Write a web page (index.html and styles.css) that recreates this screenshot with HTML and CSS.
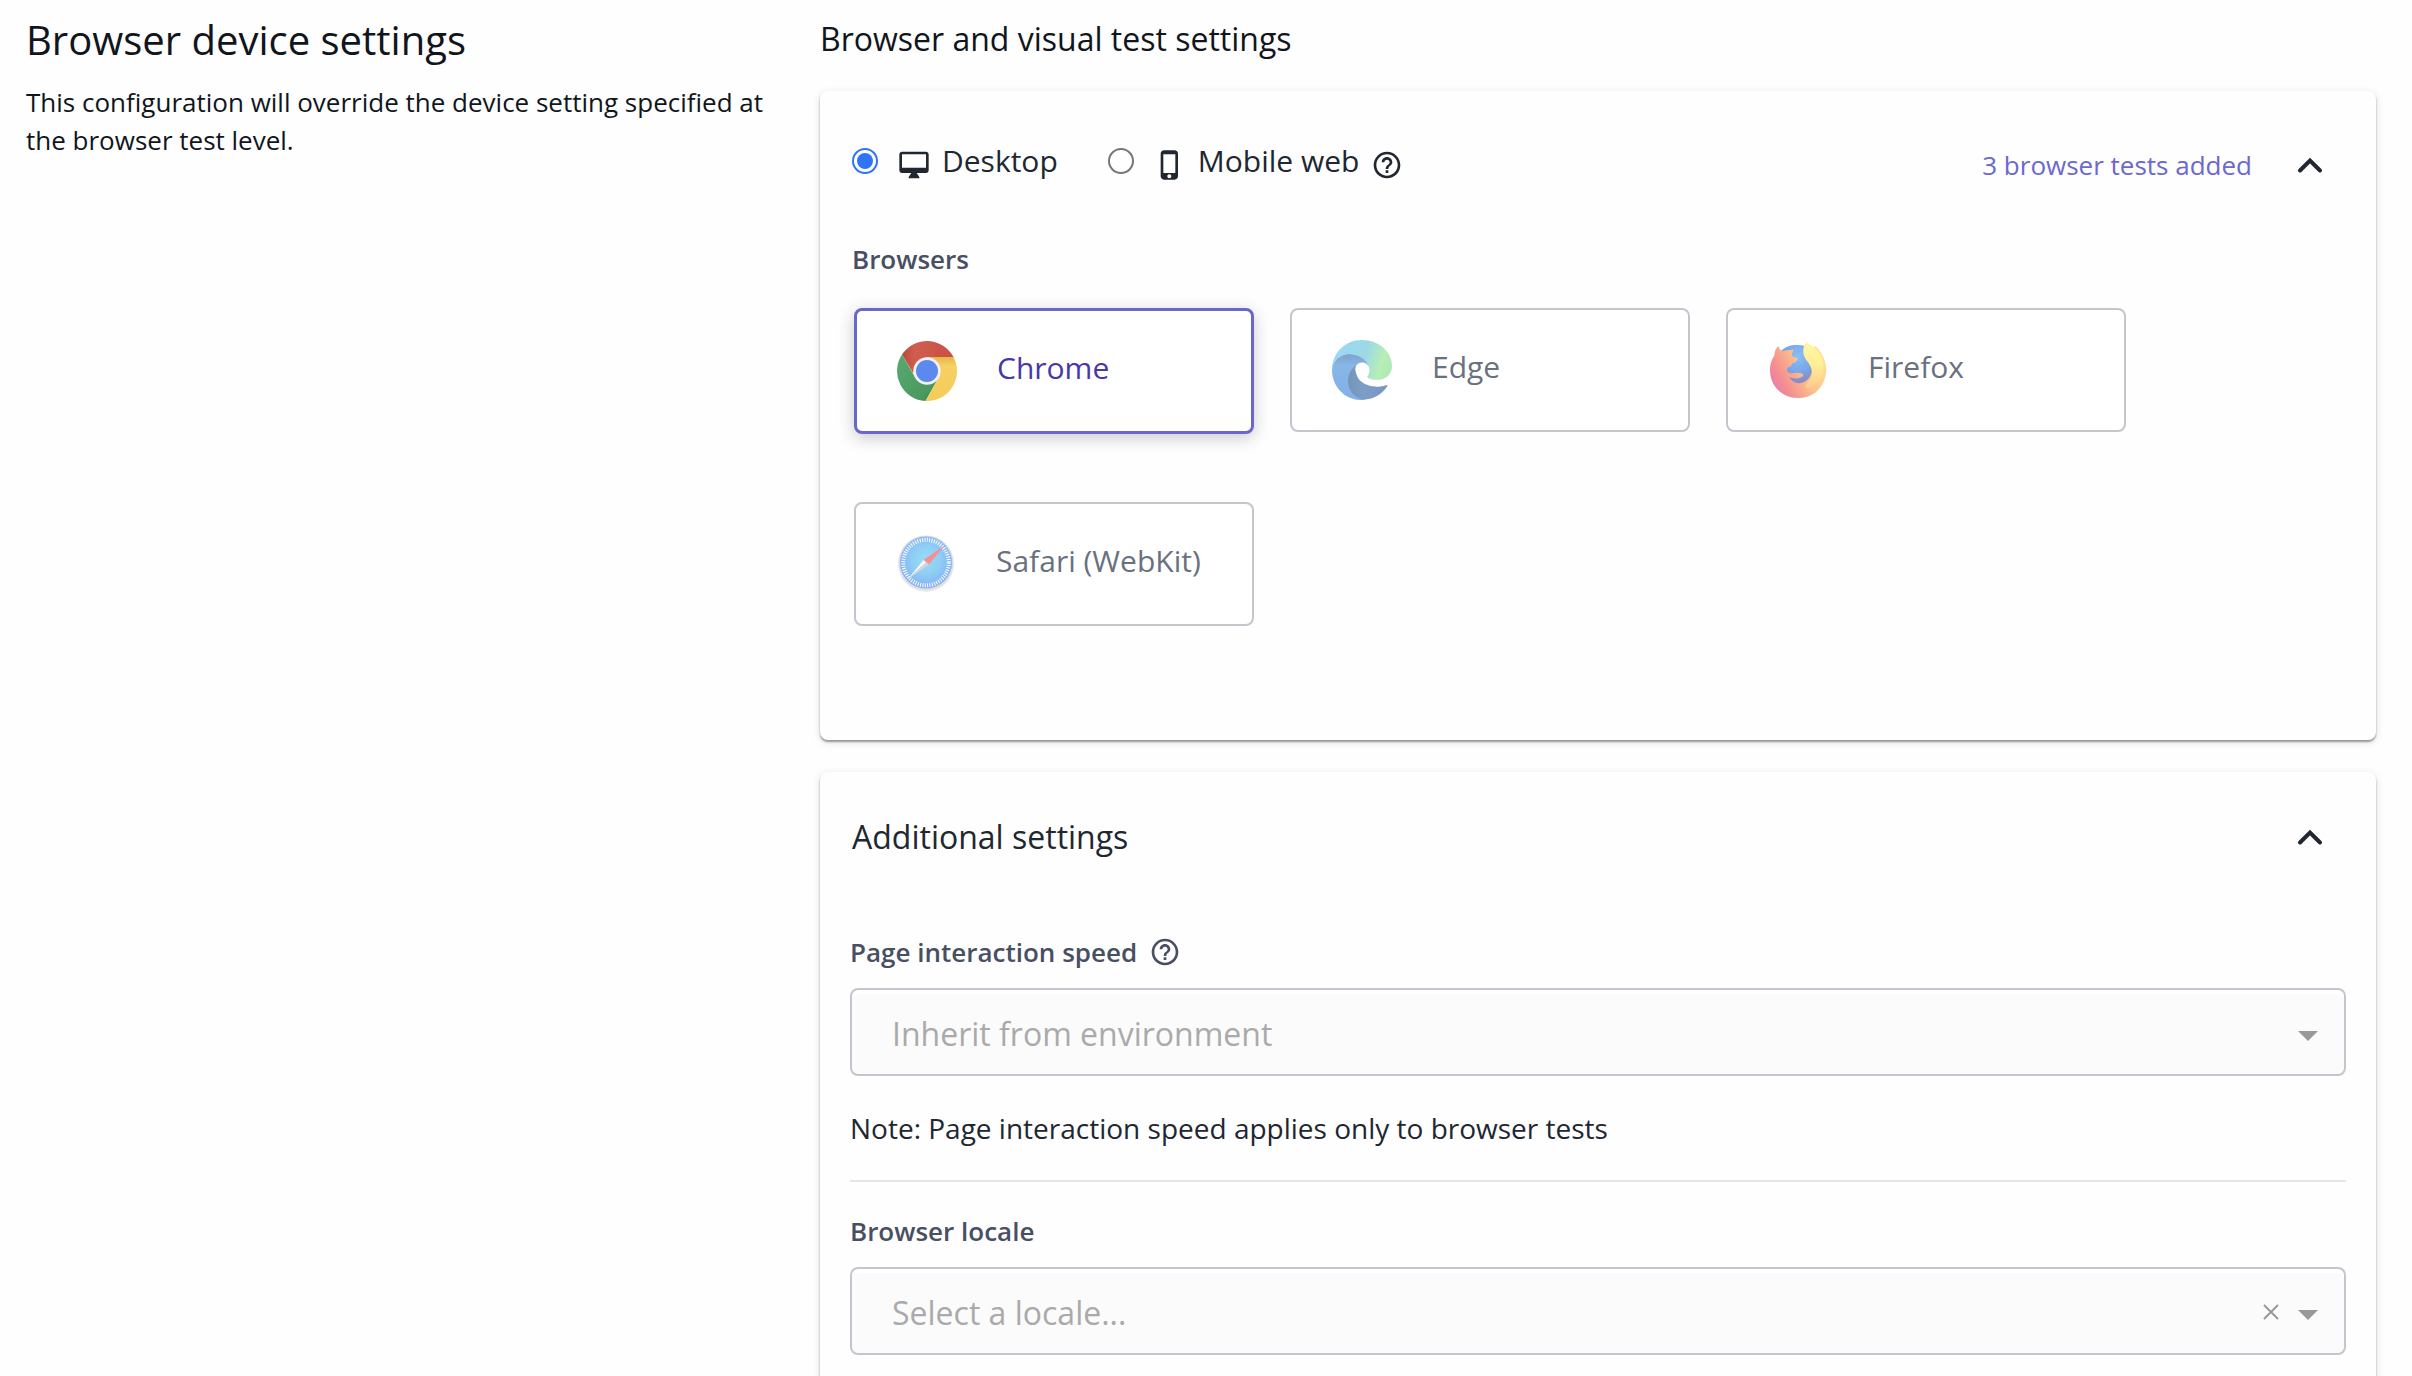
FILE: index.html
```html
<!DOCTYPE html>
<html lang="en">
<head>
    <meta charset="UTF-8">
    <meta name="viewport" content="width=device-width, initial-scale=1.0">
    <title>Browser device settings</title>
    <link rel="stylesheet" href="styles.css">
</head>

<body>
    <main class="page">
        <section class="intro">
            <h1 class="page-title">Browser device settings</h1>
            <p class="intro-text">This configuration will override the device setting specified at the browser test level.</p>
        </section>

        <section class="settings">
            <h2 class="settings-title">Browser and visual test settings</h2>

            <div class="card card-browsers">
                <div class="card-header">
                    <div class="device-types">
                        <div class="device">
                            <input type="radio" class="radio" name="device" id="desktop" checked>
                            <label for="desktop" class="device-label">
                                <svg class="icon" viewBox="0 0 24 24"><path d="M21 2H3c-1.1 0-2 .9-2 2v12c0 1.1.9 2 2 2h7l-2 3v1h8v-1l-2-3h7c1.1 0 2-.9 2-2V4c0-1.1-.9-2-2-2zm0 12H3V4h18v10z"/></svg>
                                Desktop
                            </label>
                        </div>
                        <div class="device">
                            <input type="radio" class="radio" name="device" id="mobile">
                            <label for="mobile" class="device-label">
                                <svg class="icon" viewBox="0 0 24 24"><path d="M15.5 1h-8C6.12 1 5 2.12 5 3.5v17C5 21.88 6.12 23 7.5 23h8c1.38 0 2.5-1.12 2.5-2.5v-17C18 2.12 16.88 1 15.5 1zm-4 21c-.83 0-1.5-.67-1.5-1.5s.67-1.5 1.5-1.5 1.5.67 1.5 1.5-.67 1.5-1.5 1.5zm4.5-4H7V4h9v14z"/></svg>
                                Mobile web
                                <svg class="icon" viewBox="0 0 24 24"><path d="M11 18h2v-2h-2v2zm1-16C6.48 2 2 6.48 2 12s4.48 10 10 10 10-4.48 10-10S17.52 2 12 2zm0 18c-4.41 0-8-3.59-8-8s3.59-8 8-8 8 3.59 8 8-3.59 8-8 8zm0-14c-2.21 0-4 1.79-4 4h2c0-1.1.9-2 2-2s2 .9 2 2c0 2-3 1.75-3 5h2c0-2.25 3-2.5 3-5 0-2.21-1.79-4-4-4z"/></svg>
                            </label>
                        </div>
                    </div>
                    <div class="header-actions">
                        <a href="#" class="tests-link">3 browser tests added</a>
                        <button type="button" class="collapse" aria-label="Collapse browsers">
                            <svg viewBox="0 0 48 48"><path d="M14 29.500L24 19.500L34 29.500"/></svg>
                        </button>
                    </div>
                </div>

                <h3 class="field-label browsers-label">Browsers</h3>
                <div class="browsers">
                    <button type="button" class="browser selected">
                        <svg class="browser-icon" viewBox="0 0 60 60">
                            <defs>
                                <linearGradient id="chromeRed" x1="0" y1="0" x2="1" y2="0">
                                    <stop offset="0" stop-color="#b9493b"/>
                                    <stop offset=".25" stop-color="#cf5e50"/>
                                    <stop offset="1" stop-color="#c85041"/>
                                </linearGradient>
                                <linearGradient id="chromeGreen" x1="0" y1="0" x2="1" y2="1">
                                    <stop offset="0" stop-color="#59a870"/>
                                    <stop offset=".75" stop-color="#4a9a60"/>
                                    <stop offset="1" stop-color="#357546"/>
                                </linearGradient>
                                <linearGradient id="chromeYellow" x1="0" y1="0" x2="0" y2="1">
                                    <stop offset="0" stop-color="#e5b549"/>
                                    <stop offset=".2" stop-color="#f6d062"/>
                                    <stop offset="1" stop-color="#f5cc58"/>
                                </linearGradient>
                            </defs>
                            <path fill="url(#chromeRed)" d="M5 13.500A30 30 0 0 1 56.500 16L30 16L16 32Z"/>
                            <path fill="url(#chromeGreen)" d="M5 13.500A30 30 0 0 0 28.500 60L42 36L18.500 37Z"/>
                            <path fill="url(#chromeYellow)" d="M56.500 16A30 30 0 0 1 28.500 60L41.500 37L30 16Z"/>
                            <circle cx="30" cy="30" r="13.700" fill="#f1f1f1"/>
                            <circle cx="30" cy="30" r="11" fill="#5b89ed"/>
                        </svg>
                        <span class="browser-name">Chrome</span>
                    </button>
                    <button type="button" class="browser">
                        <svg class="browser-icon" viewBox="0 0 60 60">
                            <defs>
                                <linearGradient id="edgeTop" x1="0" y1=".3" x2="1" y2=".5">
                                    <stop offset="0" stop-color="#54c0f0"/>
                                    <stop offset=".55" stop-color="#5fbfd5"/>
                                    <stop offset=".85" stop-color="#86e684"/>
                                    <stop offset="1" stop-color="#7bdc86"/>
                                </linearGradient>
                                <linearGradient id="edgeBlue" x1="0" y1="0" x2="0" y2="1">
                                    <stop offset="0" stop-color="#2a66ac"/>
                                    <stop offset=".25" stop-color="#3a86d4"/>
                                    <stop offset="1" stop-color="#2f7cdb"/>
                                </linearGradient>
                                <linearGradient id="edgeDark" x1="0" y1="0" x2="1" y2="0">
                                    <stop offset="0" stop-color="#1b4f8d"/>
                                    <stop offset=".4" stop-color="#265ea1"/>
                                    <stop offset="1" stop-color="#24509a"/>
                                </linearGradient>
                            </defs>
                            <path fill="url(#edgeBlue)" d="M0 30C0 22 7 14 17 14C28 14 36 20 37.500 28C36 24 33 22.500 30 22.500C26 22.500 23 26 23 30L33 59.800C14 62 0 47 0 30Z"/>
                            <path fill="url(#edgeDark)" d="M23.500 25.500C18 30 16 36 16 41C16 51 23 59 33 59.500C43 59 51 53 55.500 46C55.500 45 55 44.700 54 45.200C40 50 21 43 23.500 25.500Z"/>
                            <path fill="url(#edgeTop)" d="M0 30C0 13 13 0 30 0C47 0 60 12 60 26C60 34 54 40 45 40C40 40 37 39 35.500 37.500C34.500 36.500 37.500 35 37.500 30C37.500 22 28 14 17 14C7 14 0 22 0 30Z"/>
                        </svg>
                        <span class="browser-name">Edge</span>
                    </button>
                    <button type="button" class="browser">
                        <svg class="browser-icon" viewBox="0 0 60 60">
                            <defs>
                                <radialGradient id="foxGlobe" cx=".5" cy=".3" r=".7">
                                    <stop offset="0" stop-color="#3c95f7"/>
                                    <stop offset=".6" stop-color="#2268d5"/>
                                    <stop offset="1" stop-color="#44338d"/>
                                </radialGradient>
                                <linearGradient id="foxBody" x1=".95" y1=".3" x2=".05" y2=".75">
                                    <stop offset="0" stop-color="#ffc843"/>
                                    <stop offset=".4" stop-color="#fb9a44"/>
                                    <stop offset=".8" stop-color="#ef4545"/>
                                    <stop offset="1" stop-color="#d72b75"/>
                                </linearGradient>
                                <linearGradient id="foxTail" x1="0" y1="0" x2="0" y2="1">
                                    <stop offset="0" stop-color="#fff36c"/>
                                    <stop offset=".5" stop-color="#ffe550"/>
                                    <stop offset="1" stop-color="#fca746"/>
                                </linearGradient>
                            </defs>
                            <path fill="url(#foxGlobe)" d="M12 12C19 4 29 4 37 6L48 25C46 38 38 45 30 44L16 40Z"/>
                            <path fill="url(#foxBody)" d="M10.500 6C11 8 12.500 10 13.500 11.500C16.500 10 21 10.500 26 9.500C24.500 11.500 23.500 13.500 24.500 16.500L30 18C29 21 28 22 24 23.500L23 26.500C19 26.500 18 29 20 32C23 35 27 32 31 33C34 33 36 34 35 36C32 38.500 27 39.500 21.500 37C25 45 36 45 41 38C45 33 45 25 39 19L47 6C55 13 60 24 57.500 36C54 51 43 58 30 58C14 58 2 46 2 30C2 22 5 18 6.500 15C6.500 11 8 8 10.500 6Z"/>
                            <path fill="url(#foxTail)" d="M39 1C40 4 43 5 46 7C54 14 57.500 23 55 33C52 43 46 48 39 48C35 47 39 44 42 40C46 34 44 27 39 21C33 13 35 6 39 1Z"/>
                        </svg>
                        <span class="browser-name">Firefox</span>
                    </button>
                    <button type="button" class="browser">
                        <svg class="browser-icon" viewBox="0 0 60 60">
                            <defs>
                                <radialGradient id="safariFace" cx=".5" cy=".45" r=".55">
                                    <stop offset="0" stop-color="#54c6f2"/>
                                    <stop offset=".5" stop-color="#45aeef"/>
                                    <stop offset="1" stop-color="#3478f0"/>
                                </radialGradient>
                            </defs>
                            <circle cx="30" cy="30" r="28" fill="#e2e2e4"/>
                            <circle cx="30" cy="29" r="27.500" fill="#c9cace"/>
                            <circle cx="30" cy="28.600" r="26" fill="url(#safariFace)"/>
                            <circle cx="30" cy="28.600" r="22.800" fill="none" stroke="#fff" stroke-width="4" stroke-dasharray="1 1.390"/>
                            <path fill="#f0474a" d="M48.500 11.500L27.500 26L33 30.500Z"/>
                            <path fill="#f3f3f3" d="M11.500 45.500L27.500 26L30.200 28.300Z"/>
                            <path fill="#b9bcc2" d="M11.500 45.500L30.200 28.300L33 30.500Z"/>
                        </svg>
                        <span class="browser-name">Safari (WebKit)</span>
                    </button>
                </div>
            </div>

            <div class="card card-additional">
                <div class="card-header">
                    <h3 class="card-title">Additional settings</h3>
                    <button type="button" class="collapse" aria-label="Collapse additional settings">
                        <svg viewBox="0 0 48 48"><path d="M14 29.500L24 19.500L34 29.500"/></svg>
                    </button>
                </div>

                <div class="field field-speed">
                    <label for="speed" class="field-label">
                        Page interaction speed
                        <svg class="icon" viewBox="0 0 24 24"><path d="M11 18h2v-2h-2v2zm1-16C6.48 2 2 6.48 2 12s4.48 10 10 10 10-4.48 10-10S17.52 2 12 2zm0 18c-4.41 0-8-3.59-8-8s3.59-8 8-8 8 3.59 8 8-3.59 8-8 8zm0-14c-2.21 0-4 1.79-4 4h2c0-1.1.9-2 2-2s2 .9 2 2c0 2-3 1.75-3 5h2c0-2.25 3-2.5 3-5 0-2.21-1.79-4-4-4z"/></svg>
                    </label>
                    <div class="select-wrap">
                        <select id="speed" class="select">
                            <option>Inherit from environment</option>
                        </select>
                        <span class="arrow"></span>
                    </div>
                    <p class="note">Note: Page interaction speed applies only to browser tests</p>
                </div>

                <div class="field field-locale">
                    <label for="locale" class="field-label">Browser locale</label>
                    <div class="select-wrap">
                        <select id="locale" class="select">
                            <option>Select a locale...</option>
                        </select>
                        <button type="button" class="clear" aria-label="Clear locale">
                            <svg viewBox="0 0 16 16"><path d="M1 1L15 15M15 1L1 15"/></svg>
                        </button>
                        <span class="arrow"></span>
                    </div>
                </div>
            </div>
        </section>
    </main>
</body>

</html>
```
FILE: styles.css
```css
* {
    margin: 0;
    padding: 0;
    box-sizing: border-box;
}

body {
    background: #fefefe;
    color: #212730;
    font-family: "Open Sans", "Noto Sans", sans-serif;
    font-size: 26px;
}

button,
select {
    font-family: inherit;
}

.page {
    display: grid;
    grid-template-columns: 1fr 2fr;
    gap: 16px;
    padding: 13px 36px 0 26px;
}

/* left column */
.intro {
    padding-right: 24px;
    color: #11151c;
}

.page-title {
    font-size: 40px;
    font-weight: 400;
    line-height: 54px;
}

.intro-text {
    margin-top: 16px;
    font-size: 26px;
    line-height: 38px;
}

.settings-title {
    margin-bottom: 26px;
    color: #11151c;
    font-size: 32px;
    font-weight: 400;
    line-height: 52px;
}

/* cards */
.card {
    padding: 0 30px;
    background: #fefefe;
    border-radius: 8px;
    box-shadow: 0 2px 2px rgba(0, 0, 0, 0.36), 0 2px 8px rgba(0, 0, 0, 0.12);
}

.card-browsers {
    margin-bottom: 32px;
    padding-top: 50px;
    padding-bottom: 114px;
}

.card-additional {
    padding-top: 41px;
    padding-bottom: 60px;
}

.card-header {
    display: flex;
    justify-content: space-between;
    align-items: flex-start;
    padding: 0 12px 0 2px;
}

.card-title {
    font-size: 32px;
    font-weight: 400;
    line-height: 48px;
}

.header-actions {
    display: flex;
    align-items: center;
    gap: 34px;
}

.tests-link {
    color: #6b68ce;
    font-size: 26px;
    line-height: 36px;
    text-decoration: none;
}

.collapse {
    width: 48px;
    height: 48px;
    border: none;
    background: none;
    cursor: pointer;
}

.collapse svg {
    display: block;
    fill: none;
    stroke: #212730;
    stroke-width: 4;
    stroke-linecap: round;
}

/* desktop / mobile switch */
.device-types {
    display: flex;
    gap: 50px;
}

.device {
    display: flex;
    align-items: center;
    gap: 20px;
}

.device-label {
    display: flex;
    align-items: center;
    gap: 12px;
    font-size: 30px;
    line-height: 40px;
}

.icon {
    width: 32px;
    height: 32px;
    fill: currentColor;
}

.device-label .icon {
    margin-top: 8px;
}

.radio {
    display: grid;
    place-items: center;
    width: 26px;
    height: 26px;
    border: 2px solid #767676;
    border-radius: 50%;
    background: #fff;
    appearance: none;
}

.radio:checked {
    border-color: #2f74f6;
}

.radio:checked::before {
    content: "";
    width: 16px;
    height: 16px;
    border-radius: 50%;
    background: #2f74f6;
}

/* browser tiles */
.browsers-label {
    margin-top: 52px;
    padding-left: 2px;
}

.browsers {
    display: flex;
    flex-wrap: wrap;
    align-items: flex-start;
    gap: 68px 36px;
    margin-top: 31px;
    padding: 0 4px;
}

.browser {
    display: flex;
    align-items: center;
    gap: 40px;
    width: 400px;
    height: 124px;
    padding: 0 40px;
    border: 2px solid #c5c5cd;
    border-radius: 8px;
    background: #fff;
    color: #697180;
    font-size: 30px;
    cursor: pointer;
}

.browser-icon {
    width: 60px;
    height: 60px;
    opacity: 0.6;
}

.browser-name {
    padding-bottom: 6px;
    line-height: 40px;
}

.browser.selected {
    height: 126px;
    border: 3px solid #6968ca;
    box-shadow: 0 4px 16px rgba(33, 39, 60, 0.24);
    color: #4638a8;
}

.selected .browser-icon {
    opacity: 1;
}

/* form fields */
.field-label {
    display: flex;
    align-items: center;
    gap: 12px;
    color: #484f63;
    font-size: 26px;
    font-weight: 600;
    line-height: 36px;
}

.field-speed {
    margin-top: 73px;
    padding-bottom: 33px;
    border-bottom: 2px solid #e4e4e9;
}

.field-locale {
    margin-top: 31px;
}

.select-wrap {
    position: relative;
    margin-top: 18px;
}

.select {
    display: block;
    width: 100%;
    height: 88px;
    padding: 2px 100px 0 40px;
    border: 2px solid #c5c5cd;
    border-radius: 8px;
    background: #fbfbfb;
    box-shadow: inset 0 4px 1px #fff;
    color: #aaa;
    font-size: 32px;
    appearance: none;
}

.arrow {
    position: absolute;
    top: 43px;
    right: 28px;
    border: 10px solid transparent;
    border-top-color: #999;
    border-bottom: none;
    pointer-events: none;
}

.clear {
    position: absolute;
    top: 37px;
    right: 67px;
    width: 16px;
    height: 16px;
    border: none;
    background: none;
}

.clear svg {
    display: block;
    stroke: #999;
    stroke-width: 2;
}

.note {
    margin-top: 33px;
    font-size: 28px;
    line-height: 38px;
}
```
